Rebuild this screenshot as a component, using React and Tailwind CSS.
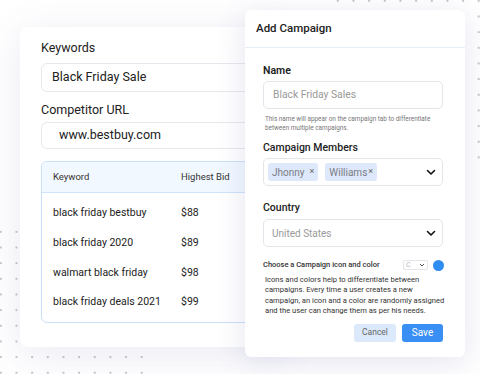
import React from 'react';

const rows = [
  { keyword: 'black friday bestbuy', bid: '$88' },
  { keyword: 'black friday 2020', bid: '$89' },
  { keyword: 'walmart black friday', bid: '$98' },
  { keyword: 'black friday deals 2021', bid: '$99' },
];

const Chevron = () => (
  <svg width="12" height="12" viewBox="0 0 12 12" fill="none">
    <path d="M2.5 4.5L6 8l3.5-3.5" stroke="#111" strokeWidth="1.6" strokeLinecap="round" strokeLinejoin="round" />
  </svg>
);

const Chip = ({ label, gap }) => (
  <span className={`flex items-center h-[18px] px-[4px] rounded-[3px] bg-[#dde9fb] text-[10px] text-[#7c7c84] ${gap}`}>
    {label}
    <span className="text-[9px] text-[#666]">×</span>
  </span>
);

const App = () => {
  return (
    <div className="relative w-[480px] h-[374px] overflow-hidden bg-white font-['Roboto',sans-serif] text-[#222]">
      {/* decorative dot grids */}
      <div className="absolute left-[-7px] top-[224px] w-[158px] h-[160px] bg-[radial-gradient(circle,#c5c5cc_0.8px,transparent_1px)] bg-[length:15.67px_15.67px]" />
      <div className="absolute left-[330px] top-[-7px] w-[160px] h-[166px] bg-[radial-gradient(circle,#c5c5cc_0.8px,transparent_1px)] bg-[length:15.67px_15.67px]" />

      {/* keyword card */}
      <div className="relative ml-[20px] mt-[27px] w-[260px] h-[320px] rounded-[8px] bg-white shadow-[0_8px_40px_rgba(90,90,160,0.13)] pl-[21px] pt-[13px]">
        <div className="text-[12.5px] leading-[16px]">Keywords</div>
        <div className="mt-[7px] h-[29px] w-[260px] rounded-[6px] border border-[#e6e8ee] flex items-center pl-[10px] text-[12.5px]">
          Black Friday Sale
        </div>
        <div className="mt-[10px] text-[12.5px] leading-[16px]">Competitor URL</div>
        <div className="mt-[4px] h-[27px] w-[260px] rounded-[6px] border border-[#e6e8ee] flex items-center pl-[17px] text-[12.5px]">
          www.bestbuy.com
        </div>
        <div className="mt-[12px] w-[260px] h-[162px] rounded-[6px] border border-[#c9e0fa] overflow-hidden">
          <div className="h-[31px] bg-[#f2f8ff] border-b border-[#cfe3fb] flex items-center text-[9.5px] text-[#333]">
            <span className="pl-[11px] w-[139px]">Keyword</span>
            <span>Highest Bid</span>
          </div>
          <div className="pt-[5px]">
            {rows.map((r) => (
              <div key={r.keyword} className="h-[29.8px] flex items-center text-[10.5px]">
                <span className="pl-[11px] w-[139px]">{r.keyword}</span>
                <span>{r.bid}</span>
              </div>
            ))}
          </div>
        </div>
      </div>

      {/* modal */}
      <div className="absolute left-[245px] top-[10px] w-[220px] h-[347px] rounded-[6px] bg-white shadow-[0_6px_30px_rgba(90,90,160,0.16)]">
        <div className="h-[38px] border-b border-[#e6eefa] flex items-center pl-[11px] text-[11.5px] font-medium">
          Add Campaign
        </div>
        <div className="pl-[18px] pr-[22px]">
          <div className="mt-[17px] text-[10.5px] font-semibold leading-[12px]">Name</div>
          <div className="mt-[4px] h-[28px] rounded-[5px] border border-[#e3e5ea] flex items-center pl-[9px] text-[10.3px] text-[#999]">
            Black Friday Sales
          </div>
          <div className="mt-[6px] pl-[2px] text-[6.4px] leading-[9px] text-[#777]">
            This name will appear on the campaign tab to differentiate
            <br />
            between multiple campaigns.
          </div>
          <div className="mt-[8px] text-[10.5px] font-medium leading-[13px]">Campaign Members</div>
          <div className="mt-[4px] h-[28px] rounded-[5px] border border-[#e3e5ea] flex items-center pl-[4px] pr-[5px]">
            <Chip label="Jhonny" gap="gap-[5px]" />
            <span className="w-[7px]" />
            <Chip label="Williams" gap="gap-[1px]" />
            <span className="ml-auto"><Chevron /></span>
          </div>
          <div className="mt-[15px] text-[10.5px] font-medium leading-[13px]">Country</div>
          <div className="mt-[5px] h-[28px] rounded-[5px] border border-[#e3e5ea] flex items-center pl-[8px] pr-[5px] text-[10px] text-[#999]">
            United States
            <span className="ml-auto"><Chevron /></span>
          </div>
          <div className="mt-[12px] flex items-center h-[12px]">
            <span className="text-[7.5px] font-medium text-[#333]">Choose a Campaign icon and color</span>
            <span className="ml-auto flex items-center justify-between w-[25px] h-[10px] rounded-[2px] border border-[#e3e5ea] px-[2px] text-[7px] text-[#bbb]">
              C
              <svg width="6" height="6" viewBox="0 0 6 6" fill="none">
                <path d="M1 2l2 2 2-2" stroke="#555" strokeWidth="1" />
              </svg>
            </span>
            <span className="ml-[5px] mr-[-1px] w-[11px] h-[11px] rounded-full bg-[#2f8cf3]" />
          </div>
          <p className="mt-[4px] pl-[2px] text-[7.6px] leading-[10.4px] text-[#333] whitespace-nowrap">
            Icons and colors help to differentiate between
            <br />
            campaigns. Every time a user creates a new
            <br />
            campaign, an icon and a color are randomly assigned
            <br />
            and the user can change them as per his needs.
          </p>
          <div className="mt-[7px] flex justify-end gap-[6px]">
            <button className="w-[42px] h-[18px] rounded-[3px] bg-[#dbe9fb] text-[8.5px] text-[#666]">Cancel</button>
            <button className="w-[41px] h-[18px] rounded-[3px] bg-[#3a8ff5] text-[10px] text-white">Save</button>
          </div>
        </div>
      </div>
    </div>
  );
};

export default App;
